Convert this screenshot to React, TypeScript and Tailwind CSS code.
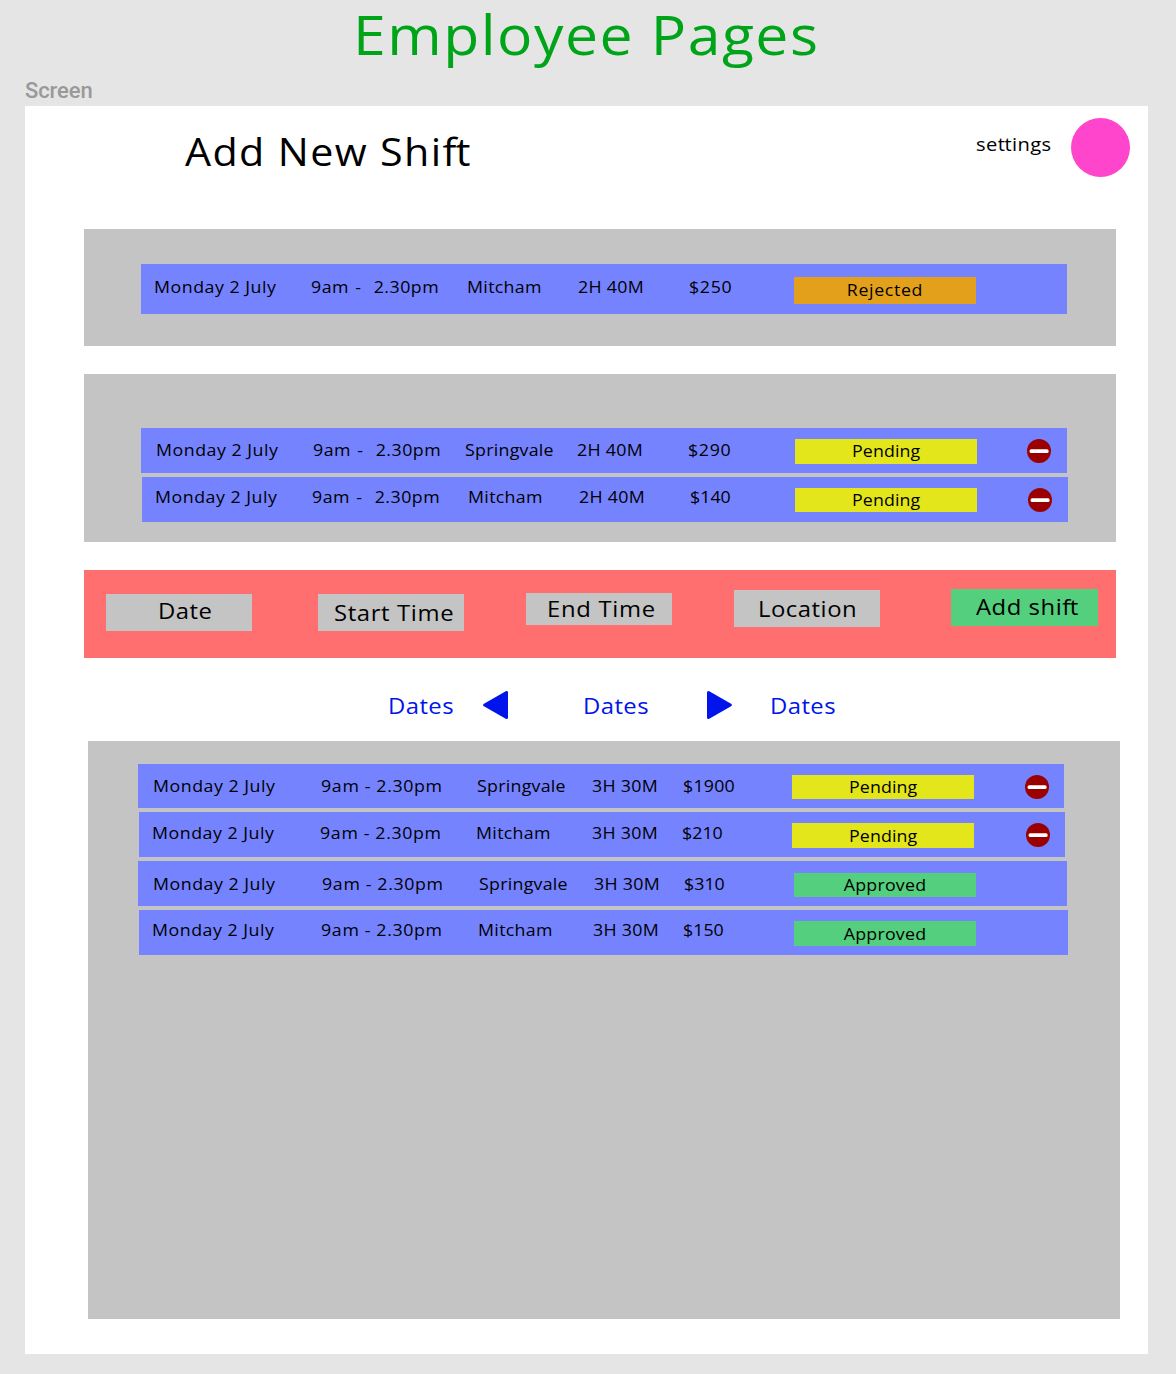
type Status = 'Rejected' | 'Pending' | 'Approved';

type Shift = {
  date: string;
  time: string;
  place: string;
  length: string;
  pay: string;
  status: Status;
  removable?: boolean;
  row: string;
  text: string;
  badge: string;
  icon?: string;
};

const tracking: Record<string, string> = {
  'Monday 2 July': 'tracking-[0.48px]',
  '9am -  2.30pm': 'tracking-[0.45px] [word-spacing:1px]',
  '9am - 2.30pm': 'tracking-[0.6px]',
  Mitcham: 'tracking-[0.28px]',
  Springvale: 'tracking-[0.24px]',
  '2H 40M': 'tracking-[0.25px]',
  '3H 30M': 'tracking-[0.25px]',
  $250: 'tracking-[0.6px]',
  $290: 'tracking-[0.6px]',
  $140: 'tracking-[0px]',
  $150: 'tracking-[0px]',
  $210: 'tracking-[0px]',
  $310: 'tracking-[0px]',
  $1900: 'tracking-[0.2px]',
  Rejected: 'tracking-[0.6px]',
  Pending: 'tracking-[0.1px]',
  Approved: 'tracking-[0.22px]',
};

const badgeColor: Record<Status, string> = {
  Rejected: 'bg-[#e3a01a]',
  Pending: 'bg-[#e3e61a]',
  Approved: 'bg-[#53cf7d]',
};

const rejected: Shift[] = [
  {
    date: 'Monday 2 July', time: '9am -  2.30pm', place: 'Mitcham', length: '2H 40M', pay: '$250', status: 'Rejected',
    row: 'ml-[57px] h-[50px] w-[926px] pl-3 grid-cols-[157px_156px_111px_111px_106px_182px_1fr]',
    text: 'mt-[11px]', badge: 'mt-[13px] h-[27px] leading-[26px]',
  },
];

const pending: Shift[] = [
  {
    date: 'Monday 2 July', time: '9am -  2.30pm', place: 'Springvale', length: '2H 40M', pay: '$290', status: 'Pending', removable: true,
    row: 'ml-[57px] h-[45px] w-[926px] pl-3.5 grid-cols-[157px_152px_112px_111px_108px_182px_1fr]',
    text: 'mt-2.5', badge: 'mt-[11px] h-[25px] leading-6', icon: 'mr-4',
  },
  {
    date: 'Monday 2 July', time: '9am -  2.30pm', place: 'Mitcham', length: '2H 40M', pay: '$140', status: 'Pending', removable: true,
    row: 'ml-[58px] h-[45px] w-[926px] pl-3 grid-cols-[157px_156px_111px_111px_106px_182px_1fr]',
    text: 'mt-2', badge: 'mt-[11px] h-6 leading-6', icon: 'mr-4',
  },
];

const scheduled: Shift[] = [
  {
    date: 'Monday 2 July', time: '9am - 2.30pm', place: 'Springvale', length: '3H 30M', pay: '$1900', status: 'Pending', removable: true,
    row: 'ml-[50px] h-[44px] w-[926px] pl-3.5 grid-cols-[168px_156px_115px_91px_110px_182px_1fr]',
    text: 'mt-2.5', badge: 'mt-[11px] h-6 leading-6', icon: 'mr-[15px]',
  },
  {
    date: 'Monday 2 July', time: '9am - 2.30pm', place: 'Mitcham', length: '3H 30M', pay: '$210', status: 'Pending', removable: true,
    row: 'ml-[51px] h-[45px] w-[926px] pl-3 grid-cols-[168px_156px_116px_90px_111px_182px_1fr]',
    text: 'mt-[9px]', badge: 'mt-[11px] h-[25px] leading-[25px]', icon: 'mr-[15px]',
  },
  {
    date: 'Monday 2 July', time: '9am - 2.30pm', place: 'Springvale', length: '3H 30M', pay: '$310', status: 'Approved',
    row: 'ml-[50px] h-[45px] w-[929px] pl-3.5 grid-cols-[169px_157px_115px_90px_111px_182px_1fr]',
    text: 'mt-[11px]', badge: 'mt-3 h-6 leading-6',
  },
  {
    date: 'Monday 2 July', time: '9am - 2.30pm', place: 'Mitcham', length: '3H 30M', pay: '$150', status: 'Approved',
    row: 'ml-[51px] h-[45px] w-[929px] pl-3 grid-cols-[169px_157px_115px_90px_112px_182px_1fr]',
    text: 'mt-2', badge: 'mt-[11px] h-[25px] leading-[25px]',
  },
];

function Cell({ value, className }: { value: string; className: string }) {
  return <span className={`origin-left scale-x-[1.06] pl-px leading-6 ${tracking[value]} ${className}`}>{value}</span>;
}

function RemoveIcon({ className }: { className?: string }) {
  return (
    <svg viewBox="0 0 24 24" className={`mt-[11px] size-6 justify-self-end ${className}`}>
      <circle cx="12" cy="12" r="12" fill="#9b0000" />
      <rect x="2.6" y="10.2" width="19" height="3.8" rx="1.6" fill="#fff" />
    </svg>
  );
}

function ShiftRow({ shift }: { shift: Shift }) {
  return (
    <div className={`grid items-start justify-items-start bg-[#7583ff] text-[16.8px] whitespace-pre ${shift.row}`}>
      <Cell value={shift.date} className={shift.text} />
      <Cell value={shift.time} className={shift.text} />
      <Cell value={shift.place} className={shift.text} />
      <Cell value={shift.length} className={shift.text} />
      <Cell value={shift.pay} className={shift.text} />
      <span className={`flex w-full justify-center ${badgeColor[shift.status]} ${shift.badge}`}>
        <span className={`scale-x-[1.06] ${tracking[shift.status]}`}>{shift.status}</span>
      </span>
      {shift.removable && <RemoveIcon className={shift.icon} />}
    </div>
  );
}

function Label({ children, className = '' }: { children: React.ReactNode; className?: string }) {
  return <span className={`block w-max origin-left scale-x-[1.06] ${className}`}>{children}</span>;
}

function Arrow({ className }: { className: string }) {
  return (
    <svg viewBox="0 0 25 28" className={`h-7 w-[25px] shrink-0 ${className}`}>
      <path d="M1.5 1.5 L23.3 14 L1.5 26.5 Z" fill="#0014eb" stroke="#0014eb" strokeWidth="3" strokeLinejoin="round" />
    </svg>
  );
}

export default function App() {
  return (
    <div className="h-[1374px] w-[1176px] bg-[#e5e5e5] font-['Open_Sans',sans-serif] text-black">
      <h1 className="h-[77px] pl-[353px] text-[55px] leading-[67px] whitespace-nowrap text-[#00a418]">
        <span className="inline-block origin-left scale-x-[1.07] tracking-[1.4px]">Employee Pages</span>
      </h1>
      <div className="ml-[25px] h-[29px] font-['Roboto',sans-serif] text-[22px] leading-[28px] font-medium tracking-[-0.1px] text-[#999]">Screen</div>

      <main className="ml-[25px] flex h-[1248px] w-[1123px] flex-col bg-white">
        <header className="flex h-[123px] items-start">
          <h2 className="mt-[19px] ml-40 w-[791px] text-[38.5px] leading-[52px]">
            <span className="inline-block origin-left scale-x-[1.07] tracking-[1.3px]">
              Add New Shi<span className="tracking-[-0.6px]">f</span>t
            </span>
          </h2>
          <div className="mt-[25px] w-[95px] text-[19px] leading-[26px]">
            <Label className="tracking-[0.35px]">
              se<span className="tracking-[-0.3px]">t</span>tings
            </Label>
          </div>
          <span className="mt-3 size-[59px] rounded-full bg-[#ff45cc]" />
        </header>

        <section className="ml-[59px] h-[117px] w-[1032px] bg-[#c4c4c4] pt-[35px]">
          {rejected.map((s, i) => <ShiftRow key={i} shift={s} />)}
        </section>

        <section className="mt-7 ml-[59px] flex h-[168px] w-[1032px] flex-col gap-1 bg-[#c4c4c4] pt-[54px]">
          {pending.map((s, i) => <ShiftRow key={i} shift={s} />)}
        </section>

        <section className="mt-[28px] ml-[59px] flex h-[88px] w-[1032px] items-start bg-[#ff6f6f] pl-[22px] text-[22.5px] leading-[30px] whitespace-nowrap">
          <div className="mt-6 h-[37px] w-[146px] bg-[#c4c4c4] pt-0.5 pl-[52px]">
            <Label className="tracking-[0.43px]">Date</Label>
          </div>
          <div className="mt-6 ml-[66px] h-[37px] w-[146px] bg-[#c4c4c4] pt-1 pl-4">
            <Label className="tracking-[0.6px]">Start Time</Label>
          </div>
          <div className="mt-[23px] ml-[62px] h-8 w-[146px] bg-[#c4c4c4] pt-px pl-[21px]">
            <Label className="tracking-[0.65px]">End Time</Label>
          </div>
          <div className="mt-5 ml-[62px] h-[37px] w-[146px] bg-[#c4c4c4] pt-1 pl-[24px]">
            <Label className="tracking-[0.5px]">Location</Label>
          </div>
          <button className="flex mt-[19px] ml-[71px] h-[37px] w-[147px] bg-[#53cf7d] pt-[3px] pl-[25px]">
            <Label className="tracking-[0.5px]">
              Add shi<span className="tracking-[-0.4px]">f</span>t
            </Label>
          </button>
        </section>

        <nav className="flex h-[83px] items-start pt-[33px] pl-[363px] text-[22.5px] leading-[30px] tracking-[0.4px] text-[#0014eb]">
          <div className="w-[95px]"><Label>Dates</Label></div>
          <Arrow className="rotate-180" />
          <div className="ml-[75px] w-[124px]"><Label>Dates</Label></div>
          <Arrow className="" />
          <div className="ml-[38px]"><Label>Dates</Label></div>
        </nav>

        <section className="ml-[63px] flex h-[578px] w-[1032px] flex-col gap-1 bg-[#c4c4c4] pt-[23px]">
          {scheduled.map((s, i) => <ShiftRow key={i} shift={s} />)}
        </section>
      </main>
    </div>
  );
}
